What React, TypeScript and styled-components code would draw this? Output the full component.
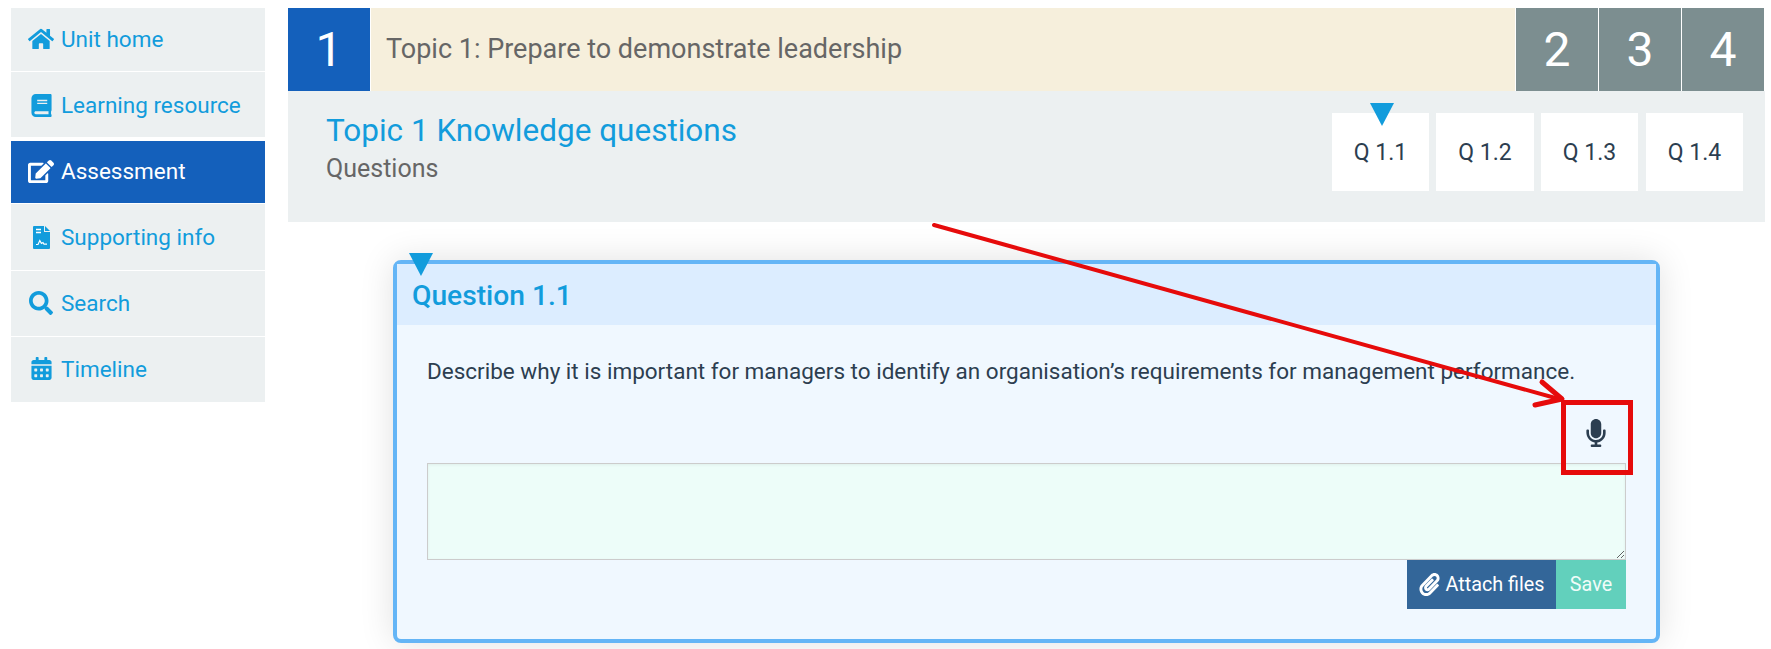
import React from "react";
import styled, { createGlobalStyle } from "styled-components";
import { FaHome, FaBook, FaEdit, FaSearch, FaCalendarAlt, FaPaperclip, FaMicrophone } from "react-icons/fa";

const Global = createGlobalStyle`
  html, body { margin: 0; padding: 0; background: #fff; }
  body { font-family: Roboto, "Liberation Sans", sans-serif; overflow: hidden; }
  * { box-sizing: border-box; }
`;

const Page = styled.div`
  position: relative;
  width: 1771px;
  height: 649px;
  display: flex;
  align-items: flex-start;
  padding: 8px 6px 0 11px;
  gap: 23px;
  overflow: hidden;
`;

const Sidebar = styled.nav`
  width: 254px;
  flex: none;
  display: flex;
  flex-direction: column;
`;

const NavItem = styled.a<{ $active?: boolean; $h: number; $mb?: number; $pt?: number; $pb?: number }>`
  display: flex;
  align-items: center;
  height: ${(p) => p.$h}px;
  margin-bottom: ${(p) => p.$mb ?? 1}px;
  padding: ${(p) => p.$pt ?? 0}px 0 ${(p) => p.$pb ?? 0}px 17px;
  gap: 7px;
  font-size: 22.5px;
  background: ${(p) => (p.$active ? "#1460bb" : "#ecf0f1")};
  color: ${(p) => (p.$active ? "#fff" : "#129cdc")};
`;

const NavIcon = styled.span<{ $size: number }>`
  width: 26px;
  height: 26px;
  flex: none;
  display: flex;
  align-items: center;
  justify-content: center;
  font-size: ${(p) => p.$size}px;
`;

const Main = styled.main`
  flex: 1;
  min-width: 0;
  display: flex;
  flex-direction: column;
`;

const TopicBar = styled.div`
  display: flex;
  height: 83px;
  gap: 1px;
  margin-right: 1px;
`;

const TopicNumber = styled.div<{ $active?: boolean }>`
  width: 82px;
  flex: none;
  display: flex;
  align-items: center;
  justify-content: center;
  font-size: 48px;
  font-weight: 400;
  color: #fff;
  background: ${(p) => (p.$active ? "#1460bb" : "#7c8e90")};
`;

const TopicTitle = styled.div`
  flex: 1;
  display: flex;
  align-items: center;
  padding: 0 0 1px 15px;
  font-size: 27px;
  color: #666;
  background: #f6efdc;
`;

const SubPanel = styled.section`
  height: 131px;
  display: flex;
  justify-content: space-between;
  background: #ecf0f1;
  padding: 22px 22px 0 38px;
`;

const Heading = styled.div`
  display: flex;
  flex-direction: column;
`;

const HeadingTitle = styled.div`
  font-size: 31.5px;
  line-height: 36px;
  color: #129cdc;
`;

const HeadingSub = styled.div`
  font-size: 25px;
  line-height: 30px;
  color: #666;
  margin-top: 5px;
`;

const QuestionTabs = styled.div`
  display: flex;
  gap: 7px;
`;

const QuestionTab = styled.div<{ $w: number; $ml?: number }>`
  position: relative;
  width: ${(p) => p.$w}px;
  height: 78px;
  margin-left: ${(p) => p.$ml ?? 0}px;
  background: #fff;
  display: flex;
  align-items: center;
  justify-content: center;
  font-size: 23px;
  color: #2c3e50;
`;

const Marker = styled.span`
  position: absolute;
  width: 0;
  height: 0;
  border-left: 12px solid transparent;
  border-right: 12px solid transparent;
  border-top: 23px solid #129cdc;
`;

const TabMarker = styled(Marker)`
  top: -10px;
  left: 38px;
`;

const CardMarker = styled(Marker)`
  top: -11px;
  left: 12px;
`;

const Card = styled.article`
  position: relative;
  width: 1267px;
  height: 383px;
  margin: 38px 0 0 105px;
  border: 4px solid #64b5f6;
  border-radius: 8px;
  background: #f0f8ff;
  box-shadow: 0 0 35px rgba(0, 0, 0, 0.12);
`;

const CardHeader = styled.h2`
  margin: 0;
  height: 61px;
  background: #dcedff;
  display: flex;
  align-items: center;
  padding: 2px 0 0 15px;
  font-size: 28.2px;
  font-weight: 500;
  color: #129cdc;
`;

const CardBody = styled.div`
  padding: 31px 30px 0 30px;
  display: flex;
  flex-direction: column;
`;

const Prompt = styled.p`
  margin: 0;
  font-size: 22.5px;
  line-height: 30px;
  color: #2c3e50;
`;

const MicRow = styled.div`
  display: flex;
  justify-content: flex-end;
  height: 77px;
  padding: 33px 16px 0 0;
  color: #2c3e50;
  font-size: 28px;
`;

const Answer = styled.textarea`
  display: block;
  width: 100%;
  height: 97px;
  background: #edfdf9;
  border: 1px solid #ccc;
  box-shadow: inset 0 1px 3px rgba(0, 0, 0, 0.06);
  padding: 6px 10px;
  margin: 0;
  outline: none;
`;

const Actions = styled.div`
  display: flex;
  justify-content: flex-end;
`;

const ActionButton = styled.button<{ $bg: string; $w: number }>`
  width: ${(p) => p.$w}px;
  height: 49px;
  border: 0;
  padding: 0;
  display: flex;
  align-items: center;
  justify-content: center;
  gap: 4px;
  font-family: inherit;
  font-size: 19.8px;
  font-weight: 400;
  color: #fff;
  background: ${(p) => p.$bg};
`;

const SaveButton = styled(ActionButton)`
  color: #f0fcf9;
`;

const Annotation = styled.svg`
  position: absolute;
  left: 0;
  top: 0;
  pointer-events: none;
`;

const FileSignIcon = () => (
  <svg width="17" height="23" viewBox="0 0 17 23">
    <path d="M0 1 Q0 0 1 0 H11 V6 H17 V22 Q17 23 16 23 H1 Q0 23 0 22 Z" fill="currentColor" />
    <path d="M12 0 L17 5 H12 Z" fill="currentColor" />
    <path d="M3 3.5 H8 M3 6.5 H8" stroke="#fff" strokeWidth="1.4" fill="none" />
    <path d="M3 18.5 H5 L6.8 14.5 L8.4 17.5 L10 16.6 L11 18.2 H14" stroke="#fff" strokeWidth="1.2" fill="none" />
  </svg>
);

const navItems = [
  { label: "Unit home", icon: <FaHome />, size: 26, h: 63, pb: 2 },
  { label: "Learning resource", icon: <FaBook />, size: 23, h: 65, mb: 4, pt: 1 },
  { label: "Assessment", icon: <FaEdit />, size: 27, h: 62, active: true, pb: 2 },
  { label: "Supporting info", icon: <FileSignIcon />, size: 23, h: 66 },
  { label: "Search", icon: <FaSearch />, size: 24, h: 65, pb: 2 },
  { label: "Timeline", icon: <FaCalendarAlt />, size: 23, h: 65, mb: 0, pb: 2 },
];

const tabs = [
  { label: "Q 1.1", w: 97 },
  { label: "Q 1.2", w: 98 },
  { label: "Q 1.3", w: 97 },
  { label: "Q 1.4", w: 97, ml: 1 },
];

export default function App() {
  return (
    <Page>
      <Global />
      <Sidebar>
        {navItems.map((n) => (
          <NavItem key={n.label} $h={n.h} $mb={n.mb} $pt={n.pt} $pb={n.pb} $active={n.active}>
            <NavIcon $size={n.size}>{n.icon}</NavIcon>
            {n.label}
          </NavItem>
        ))}
      </Sidebar>
      <Main>
        <TopicBar>
          <TopicNumber $active>1</TopicNumber>
          <TopicTitle>Topic 1: Prepare to demonstrate leadership</TopicTitle>
          <TopicNumber>2</TopicNumber>
          <TopicNumber>3</TopicNumber>
          <TopicNumber>4</TopicNumber>
        </TopicBar>
        <SubPanel>
          <Heading>
            <HeadingTitle>Topic 1 Knowledge questions</HeadingTitle>
            <HeadingSub>Questions</HeadingSub>
          </Heading>
          <QuestionTabs>
            {tabs.map((t, i) => (
              <QuestionTab key={t.label} $w={t.w} $ml={t.ml}>
                {i === 0 && <TabMarker />}
                {t.label}
              </QuestionTab>
            ))}
          </QuestionTabs>
        </SubPanel>
        <Card>
          <CardMarker />
          <CardHeader>Question 1.1</CardHeader>
          <CardBody>
            <Prompt>
              Describe why it is important for managers to identify an organisation’s requirements for management performance.
            </Prompt>
            <MicRow>
              <FaMicrophone />
            </MicRow>
            <Answer />
            <Actions>
              <ActionButton $bg="#336699" $w={149}>
                <FaPaperclip size={23} />
                Attach files
              </ActionButton>
              <SaveButton $bg="#62d0bc" $w={70}>
                Save
              </SaveButton>
            </Actions>
          </CardBody>
        </Card>
      </Main>
      <Annotation width="1771" height="649" viewBox="0 0 1771 649">
        <g stroke="#e60b0b" fill="none" strokeLinecap="round" strokeLinejoin="round">
          <path d="M934 225 L1559 399" strokeWidth="4" />
          <path d="M1542 382 L1562 399 L1535 405" strokeWidth="5" />
        </g>
        <rect x="1563.5" y="402.5" width="67" height="70" fill="none" stroke="#e60b0b" strokeWidth="5" />
      </Annotation>
    </Page>
  );
}
